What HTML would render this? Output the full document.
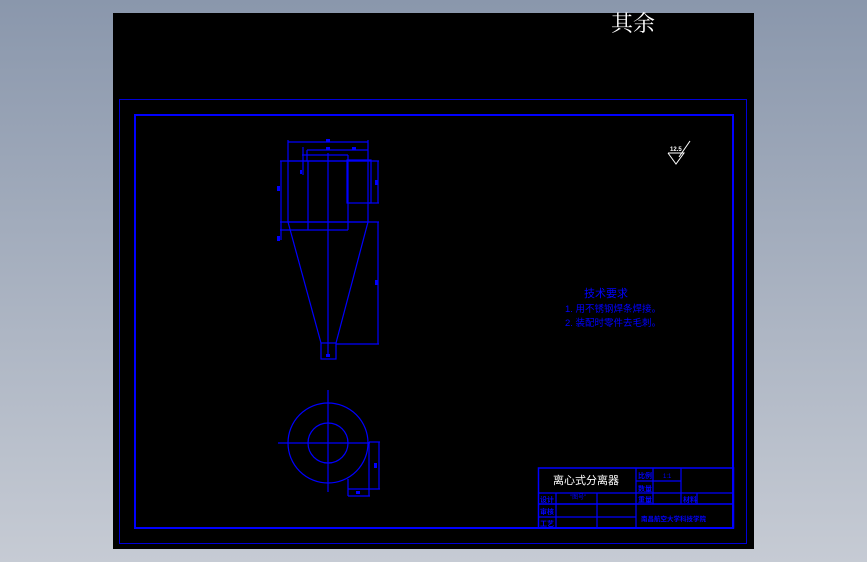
<!DOCTYPE html>
<html><head><meta charset="utf-8"><style>
html,body{margin:0;padding:0;width:867px;height:562px;overflow:hidden;background:linear-gradient(#8a97ac,#c6cbd4);}
svg{position:absolute;left:0;top:0}
</style></head><body>
<svg width="867" height="562" viewBox="0 0 867 562" xmlns="http://www.w3.org/2000/svg" font-family="Liberation Sans, Noto Sans CJK SC, sans-serif">
<rect x="113" y="13" width="641" height="536" fill="#000"/>
<text x="611" y="31" fill="#fff" font-size="22" font-family="Liberation Serif, Noto Serif CJK SC, serif">其余</text>
<rect x="119.5" y="99.5" width="627" height="444" fill="none" stroke="#0000d8" stroke-width="1"/>
<rect x="135" y="115" width="598" height="413" fill="none" stroke="#0000ff" stroke-width="2"/>
<g stroke="#0000ff" stroke-width="1.2" fill="none">
<line x1="288" y1="142" x2="368" y2="142"/><line x1="288" y1="140" x2="288" y2="161"/><line x1="368" y1="140" x2="368" y2="161"/>
<line x1="307" y1="150" x2="368" y2="150"/><line x1="307" y1="150" x2="307" y2="161"/>
<line x1="303" y1="147" x2="303" y2="175"/><line x1="302" y1="155" x2="348" y2="155"/>
<line x1="280" y1="161" x2="379" y2="161"/>
<rect x="288" y="161" width="80" height="61"/>
<line x1="308" y1="161" x2="308" y2="230"/><line x1="348" y1="155" x2="348" y2="230"/>
<rect x="347" y="160" width="24" height="43"/>
<line x1="369" y1="203" x2="379" y2="203"/><line x1="378" y1="161" x2="378" y2="203"/>
<line x1="280" y1="222" x2="379" y2="222"/><line x1="280" y1="230" x2="348" y2="230"/>
<line x1="281" y1="161" x2="281" y2="240"/>
<line x1="328" y1="153" x2="328" y2="355"/>
<line x1="288" y1="222" x2="321" y2="343"/><line x1="368" y1="222" x2="336" y2="343"/>
<rect x="321" y="343" width="15" height="16"/>
<line x1="378" y1="222" x2="378" y2="344"/><line x1="336" y1="344" x2="379" y2="344"/>
<circle cx="328" cy="443" r="40"/><circle cx="328" cy="443" r="20"/>
<line x1="328" y1="390" x2="328" y2="492"/><line x1="278" y1="443" x2="370" y2="443"/>
<line x1="369" y1="442" x2="380" y2="442"/><line x1="379" y1="442" x2="379" y2="489"/>
<line x1="348" y1="479" x2="348" y2="496"/><line x1="348" y1="489" x2="380" y2="489"/>
<line x1="348" y1="496" x2="370" y2="496"/><line x1="369" y1="442" x2="369" y2="496"/>
<rect x="538.5" y="468" width="195" height="60" stroke-width="1.5"/>
<line x1="538" y1="493" x2="733" y2="493"/><line x1="538" y1="504" x2="733" y2="504" stroke-width="1.5"/>
<line x1="538" y1="517" x2="636" y2="517"/><line x1="636" y1="481" x2="681" y2="481"/>
<line x1="556" y1="493" x2="556" y2="528"/><line x1="597" y1="493" x2="597" y2="528"/>
<line x1="636" y1="468" x2="636" y2="528"/><line x1="653" y1="468" x2="653" y2="504"/>
<line x1="681" y1="468" x2="681" y2="504"/><line x1="697" y1="493" x2="697" y2="504"/>
</g>
<g fill="#0000ff">
<rect x="326" y="139" width="4" height="3"/><rect x="326" y="147" width="4" height="3"/><rect x="352" y="147" width="4" height="3"/>
<rect x="277" y="186" width="3" height="5"/><rect x="277" y="236" width="3" height="5"/><rect x="300" y="170" width="2" height="4"/>
<rect x="375" y="180" width="3" height="5"/><rect x="375" y="280" width="3" height="5"/><rect x="326" y="354" width="4" height="3"/>
<rect x="374" y="463" width="3" height="5"/><rect x="356" y="491" width="4" height="3"/>
</g>
<g fill="#0000ff" font-size="7" font-weight="bold" font-family="Liberation Sans, Noto Sans CJK SC, sans-serif">
<text x="540" y="502">设计</text><text x="540" y="514">审核</text><text x="540" y="526">工艺</text>
<text x="638" y="478">比例</text><text x="638" y="491">数量</text><text x="638" y="502">重量</text><text x="683" y="502">材料</text>
<text x="641" y="521" font-size="6.5">南昌航空大学科技学院</text>
<text x="570" y="499" font-weight="normal" font-size="6">"图号"</text><text x="663" y="478" font-weight="normal" font-size="6">1:1</text>
</g>
<text x="553" y="484" fill="#fff" font-size="11" font-family="Liberation Sans, Noto Sans CJK SC, sans-serif">离心式分离器</text>
<g fill="#0000ff" font-family="Liberation Sans, Noto Sans CJK SC, sans-serif">
<text x="584" y="297" font-size="11">技术要求</text>
<text x="565" y="312" font-size="9.5">1. 用不锈钢焊条焊接。</text>
<text x="565" y="326" font-size="9.5">2. 装配时零件去毛刺。</text>
</g>
<g stroke="#fff" stroke-width="1" fill="none">
<polyline points="668,153 684,153 676,164 668,153"/><line x1="679" y1="157" x2="690" y2="141"/>
</g>
<text x="670" y="151" fill="#fff" font-size="6" font-weight="bold">12.5</text>
</svg>
</body></html>
